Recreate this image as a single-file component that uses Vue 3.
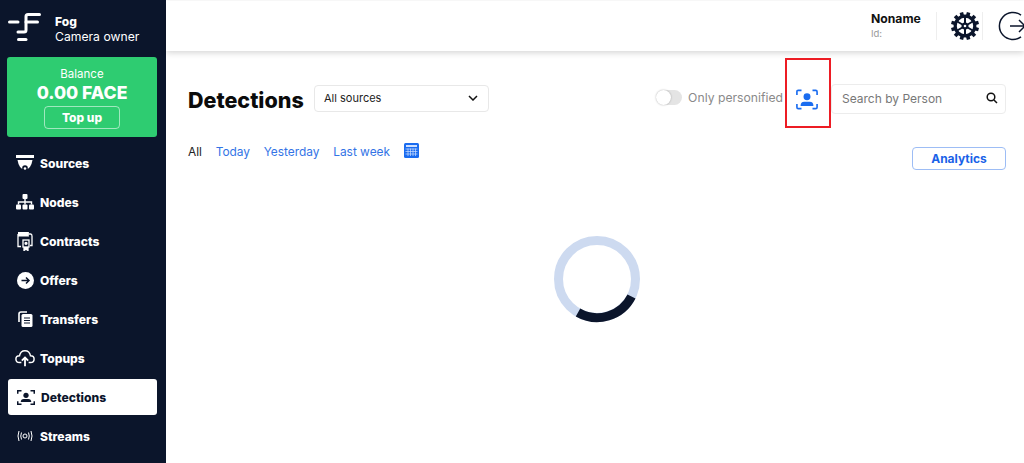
<script setup>
const navItems = [
  { label: 'Sources', icon: 'sources' },
  { label: 'Nodes', icon: 'nodes' },
  { label: 'Contracts', icon: 'contracts' },
  { label: 'Offers', icon: 'offers' },
  { label: 'Transfers', icon: 'transfers' },
  { label: 'Topups', icon: 'topups' },
  { label: 'Detections', icon: 'detections', active: true },
  { label: 'Streams', icon: 'streams' }
]
const ranges = ['Today', 'Yesterday', 'Last week']
const teeth = [0, 30, 60, 90, 120, 150, 180, 210, 240, 270, 300, 330]
</script>

<template>
  <div class="app">
    <aside class="sidebar">
      <div class="brand">
        <svg class="logo" width="36" height="32" viewBox="0 0 36 32" fill="none" stroke="#fff" stroke-width="3" stroke-linecap="round">
          <path d="M1.500 10H10" />
          <path d="M31.500 2.500H20Q18 2.500 18 4.500V18Q18 20 16 20H10" />
          <path d="M18 10H29.500" />
          <path d="M10.500 27.500H18" />
        </svg>
        <div class="brand-text">
          <div class="brand-name">Fog</div>
          <div class="brand-role">Camera owner</div>
        </div>
      </div>
      <div class="balance">
        <div class="balance-label">Balance</div>
        <div class="balance-value">0.00 FACE</div>
        <button class="topup">Top up</button>
      </div>
      <nav class="nav">
        <div v-for="item in navItems" :key="item.label" class="nav-item" :class="{ active: item.active }">
          <span class="nav-icon">
            <svg v-if="item.icon === 'sources'" width="20" height="16" viewBox="0 0 20 16" fill="currentColor">
              <path d="M1 0H19V3H1Z" />
              <path d="M2.500 5H17.500L16.500 9Q15 13 12.800 14V13A2.800 2.800 0 0 0 7.200 13V14Q5 13 3.500 9Z" />
              <circle cx="10" cy="13.500" r="1.300" />
            </svg>
            <svg v-else-if="item.icon === 'nodes'" width="18" height="16" viewBox="0 0 18 16" fill="currentColor">
              <rect x="6.500" y="0" width="5" height="5" rx="1" />
              <rect x="0" y="10.500" width="5" height="5" rx="1" />
              <rect x="6.500" y="10.500" width="5" height="5" rx="1" />
              <rect x="13" y="10.500" width="5" height="5" rx="1" />
              <path d="M8.300 5H9.700V7.300H16.200V10.500H14.800V8.700H9.700V10.500H8.300V8.700H3.200V10.500H1.800V7.300H8.300Z" />
            </svg>
            <svg v-else-if="item.icon === 'contracts'" width="16" height="20" viewBox="0 0 16 20" fill="none" stroke="currentColor" stroke-width="1.300">
              <path d="M1 3H13.500Q15 3 15 5V14.500H13" />
              <path d="M1 3V15.500H4" />
              <path d="M1 1H12Q11 3 12 5.500H1Z" fill="currentColor" stroke="none" />
              <rect x="6" y="9" width="6" height="7" />
              <path d="M7 16V19.500L9 18.300L11 19.500V16" fill="currentColor" />
              <circle cx="9" cy="12.300" r="1" fill="currentColor" />
            </svg>
            <svg v-else-if="item.icon === 'offers'" width="17" height="17" viewBox="0 0 17 17">
              <circle cx="8.500" cy="8.500" r="8.500" fill="currentColor" />
              <path d="M4.500 8.500H12M9 5.500L12 8.500L9 11.500" fill="none" stroke="#0b152b" stroke-width="1.500" />
            </svg>
            <svg v-else-if="item.icon === 'transfers'" width="15" height="16" viewBox="0 0 15 16">
              <path d="M1 11V3Q1 1 3 1H9" fill="none" stroke="currentColor" stroke-width="1.600" />
              <rect x="3.500" y="3" width="11" height="13" rx="1.500" fill="currentColor" />
              <path d="M6 7H12M6 9.500H12M6 12H12" stroke="#0b152b" stroke-width="1.200" />
            </svg>
            <svg v-else-if="item.icon === 'topups'" width="22" height="20" viewBox="0 0 22 20" fill="none" stroke="currentColor" stroke-width="1.600">
              <path d="M7 15H5Q1 15 1 11Q1 7.500 5 7.500Q6 2 11 2Q16 2 17 7.500Q21 7.500 21 11Q21 15 17 15H15" />
              <path d="M11 19V10" stroke-width="2" />
              <path d="M7.500 13L11 9.500L14.500 13" stroke-width="2" />
            </svg>
            <svg v-else-if="item.icon === 'detections'" width="18" height="17" viewBox="0 0 24 22" fill="none" stroke="currentColor" stroke-width="2">
              <path d="M1 6V2H6M18 2H23V6M1 16V20H6M18 20H23V16" />
              <circle cx="12" cy="8" r="3.500" fill="currentColor" stroke="none" />
              <path d="M5 17Q5 13 9 13H15Q19 13 19 17Z" fill="currentColor" stroke="none" />
            </svg>
            <svg v-else width="16" height="12" viewBox="0 0 16 12" fill="none" stroke="currentColor" stroke-width="1">
              <circle cx="8" cy="6" r="2" />
              <path d="M4.500 2.500Q3 6 4.500 9.500M11.500 2.500Q13 6 11.500 9.500M2 1Q0 6 2 11M14 1Q16 6 14 11" />
            </svg>
          </span>
          <span class="nav-label">{{ item.label }}</span>
        </div>
      </nav>
    </aside>

    <div class="content">
      <header class="topbar">
        <div class="user">
          <div class="user-name">Noname</div>
          <div class="user-id">Id:</div>
        </div>
        <div class="top-action gear-wrap">
          <svg width="28" height="28" viewBox="0 0 28 28" fill="none" stroke="#0b152b">
            <rect v-for="a in teeth" :key="a" x="12.200" y="0" width="3.600" height="5" fill="#0b152b" stroke="none" :transform="`rotate(${a + 15} 14 14)`" />
            <circle cx="14" cy="14" r="9.800" stroke-width="3.200" />
            <path d="M14 5V23M6.200 9.500L21.800 18.500M21.800 9.500L6.200 18.500" stroke-width="2" />
            <circle cx="14" cy="14" r="3.500" fill="#0b152b" stroke="none" />
            <circle cx="14" cy="14" r="1.300" fill="#fff" stroke="none" />
          </svg>
        </div>
        <div class="top-action logout-wrap">
          <svg width="41" height="30" viewBox="0 0 41 30" fill="none" stroke="#0b152b" stroke-width="1.500">
            <path d="M24 4.200A13.500 13.500 0 1 0 24 25.800" />
            <path d="M13 15H29M22 9L28 15L22 21" />
          </svg>
        </div>
      </header>

      <main class="page">
        <div class="toolbar">
          <h1 class="title">Detections</h1>
          <div class="select">
            <span>All sources</span>
            <svg width="10" height="6" viewBox="0 0 10 6" fill="none" stroke="#111" stroke-width="1.500"><path d="M1 1L5 5L9 1" /></svg>
          </div>
          <div class="toggle-group">
            <span class="toggle"><span class="knob"></span></span>
            <span class="toggle-label">Only personified</span>
          </div>
          <div class="face-button">
            <svg width="22" height="21" viewBox="0 0 24 22" fill="none" stroke="#1a6cf0" stroke-width="1.800">
              <path d="M1 6V2.500Q1 1 2.500 1H6M18 1H21.500Q23 1 23 2.500V6M1 16V19.500Q1 21 2.500 21H6M18 21H21.500Q23 21 23 19.500V16" />
              <circle cx="12" cy="8" r="3.800" fill="#1a6cf0" stroke="none" />
              <path d="M5 18Q5 13.500 9 13.500H15Q19 13.500 19 18Z" fill="#1a6cf0" stroke="none" />
            </svg>
            <span class="annotation"></span>
          </div>
          <div class="search">
            <span>Search by Person</span>
            <svg width="12" height="12" viewBox="0 0 12 12" fill="none" stroke="#111" stroke-width="1.500"><circle cx="5" cy="5" r="3.800" /><path d="M8 8L11 11" /></svg>
          </div>
        </div>

        <div class="filters">
          <span class="range current">All</span>
          <span v-for="r in ranges" :key="r" class="range">{{ r }}</span>
          <svg class="calendar" width="15" height="15" viewBox="0 0 15 15">
            <rect width="15" height="15" rx="1.500" fill="#1a6cf0" />
            <rect x="2" y="2" width="11" height="2" fill="#cfe0ff" />
            <path d="M1.500 6H13.500M1.500 8.500H13.500M1.500 11H13.500M4 5.500V13M6.500 5.500V13M9 5.500V13M11.500 5.500V13" stroke="#cfe0ff" stroke-width="0.700" />
          </svg>
          <button class="analytics">Analytics</button>
        </div>

        <div class="spinner-wrap">
          <svg width="88" height="88" viewBox="0 0 88 88" fill="none" stroke-width="9">
            <circle cx="44" cy="44" r="38.500" stroke="#cddaf0" />
            <path d="M25 77.500A38.500 38.500 0 0 0 78.500 61.500" stroke="#0b152b" />
          </svg>
        </div>
      </main>
    </div>
  </div>
</template>

<style>
html, body { margin: 0; padding: 0; background: #fff; overflow: hidden; }
</style>

<style scoped>
.app {
  display: flex;
  width: 1024px;
  height: 463px;
  overflow: hidden;
  font-family: Inter, "Liberation Sans", sans-serif;
  color: #0b152b;
}
.sidebar {
  box-sizing: border-box;
  width: 166px;
  flex: none;
  background: #0b152b;
  color: #fff;
  padding: 12px 9px 0 7px;
  overflow: hidden;
}
.brand {
  display: flex;
  align-items: flex-start;
  height: 45px;
}
.logo { flex: none; margin-left: 1px; }
.brand-text { margin-left: 11px; padding-top: 2px; }
.brand-name { font-size: 12px; font-weight: 800; line-height: 15px; }
.brand-role { font-size: 12.200px; line-height: 15px; }
.balance {
  box-sizing: border-box;
  width: 150px;
  height: 80px;
  background: #2ecc71;
  border-radius: 3px;
  display: flex;
  flex-direction: column;
  align-items: center;
  padding-top: 10px;
}
.balance-label { font-size: 11.500px; line-height: 14px; }
.balance-value { font-size: 17.600px; font-weight: 800; line-height: 20px; margin-top: 2px; }
.topup {
  box-sizing: border-box;
  width: 76px;
  height: 23px;
  margin-top: 3px;
  padding: 0;
  border: 1px solid rgba(255, 255, 255, .55);
  border-radius: 4px;
  background: transparent;
  color: #fff;
  font: 800 12px Inter, sans-serif;
}
.nav {
  display: flex;
  flex-direction: column;
  gap: 3px;
  margin-top: 8px;
  margin-left: 1px;
}
.nav-item {
  box-sizing: border-box;
  width: 149px;
  height: 36px;
  display: flex;
  align-items: center;
  font-size: 12.100px;
  font-weight: 800;
  padding-left: 7px;
  border-radius: 3px;
}
.nav-item.active { background: #fff; color: #0b152b; padding-left: 8px; }
.nav-icon {
  width: 20px;
  flex: none;
  margin-right: 5px;
  display: flex;
  align-items: center;
  justify-content: center;
}
.content { flex: 1; min-width: 0; display: flex; flex-direction: column; }
.topbar {
  box-sizing: border-box;
  height: 50px;
  margin-top: 1px;
  flex: none;
  display: flex;
  align-items: center;
  justify-content: flex-end;
  background: #fff;
  box-shadow: 0 2px 6px rgba(0, 0, 0, .16);
  overflow: hidden;
  position: relative;
}
.user { width: 65px; padding-bottom: 1px; }
.user-name { font-size: 12.200px; font-weight: 700; line-height: 16px; color: #111; }
.user-id { font-size: 9.500px; line-height: 12px; color: #999; margin-top: 1px; }
.top-action { display: flex; align-items: center; height: 28px; }
.gear-wrap {
  box-sizing: border-box;
  width: 47px;
  justify-content: flex-end;
  padding-right: 3px;
  border-left: 1px solid #eee;
  border-right: 1px solid #eee;
}
.logout-wrap { width: 41px; flex: none; padding-left: 14px; margin-right: -14px; }
.page { flex: 1; padding: 33px 18px 0 22px; }
.toolbar { display: flex; align-items: center; height: 30px; }
.title { margin: 0; width: 126px; flex: none; padding-top: 2px; font-size: 21.500px; font-weight: 800; color: #0b0b0b; }
.select {
  box-sizing: border-box;
  width: 175px;
  height: 27px;
  margin-top: -2px;
  display: flex;
  align-items: center;
  justify-content: space-between;
  padding: 0 10px 0 9px;
  font-size: 11px;
  color: #222;
  border: 1px solid #e8e8e8;
  border-radius: 4px;
}
.toggle-group { display: flex; align-items: center; margin-left: auto; margin-top: -3px; }
.toggle {
  width: 26px;
  height: 15px;
  border-radius: 8px;
  background: #e4e4e4;
  display: flex;
}
.knob { width: 15px; height: 15px; border-radius: 50%; background: #fff; box-shadow: 0 0 2px rgba(0,0,0,.3); }
.toggle-label { font-size: 12.200px; color: #8a8a8a; margin-left: 6px; }
.face-button {
  position: relative;
  width: 48px;
  display: flex;
  justify-content: center;
}
.annotation {
  position: absolute;
  left: 2px;
  top: -31px;
  width: 46px;
  height: 70px;
  box-sizing: border-box;
  border: 2px solid #ed1c24;
}
.search {
  box-sizing: border-box;
  width: 175px;
  height: 30px;
  display: flex;
  align-items: center;
  justify-content: space-between;
  padding: 0 7px 2px 10px;
  font-size: 12px;
  color: #777;
  border: 1px solid #ececec;
  border-radius: 4px;
}
.filters { display: flex; align-items: center; height: 24px; margin-top: 25px; }
.range { font-size: 11.900px; color: #3374e6; margin-right: 13.700px; }
.range.current { color: #222; }
.calendar { margin-top: -2px; }
.analytics {
  box-sizing: border-box;
  margin-left: auto;
  margin-top: 14px;
  width: 94px;
  height: 23px;
  padding: 0;
  background: #fff;
  border: 1px solid #9dbdf5;
  border-radius: 4px;
  color: #1a62e8;
  font: 700 12px Inter, sans-serif;
}
.spinner-wrap { display: flex; justify-content: center; margin-top: 72px; }
</style>
